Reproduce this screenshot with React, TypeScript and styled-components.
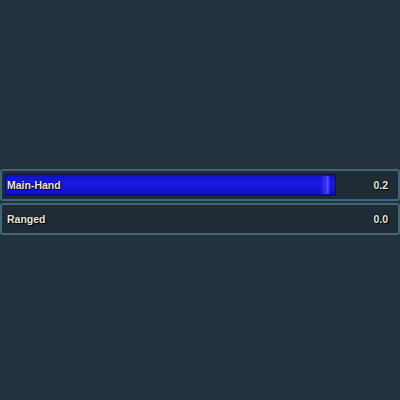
import React from 'react';
import styled, { createGlobalStyle } from 'styled-components';

const GlobalStyle = createGlobalStyle`
  html, body {
    margin: 0;
    padding: 0;
    background: #23323c;
    width: 400px;
    height: 400px;
    overflow: hidden;
  }
`;

const Page = styled.div`
  width: 400px;
  height: 400px;
  display: flex;
  flex-direction: column;
  justify-content: center;
  gap: 2px;
  padding-top: 4px;
  box-sizing: border-box;
`;

const SwingRow = styled.div`
  height: 32px;
  box-sizing: border-box;
  border: 2px solid #3d6679;
  border-radius: 3px;
  background: #1f2c35;
  display: flex;
  align-items: center;
  padding: 0 10px 0 3px;
`;

const Track = styled.div`
  width: 356px;
  height: 22px;
  position: relative;
  display: flex;
  align-items: center;
`;

const Fill = styled.div`
  position: absolute;
  left: 0;
  top: 0;
  bottom: 0;
  box-sizing: border-box;
  border: 1px solid #10104a;
  background: linear-gradient(#1010bc, #1818e0 30%, #1616da 70%, #0c0cae);
`;

// soft glow near the leading edge of the fill
const Spark = styled.div`
  position: absolute;
  top: 1px;
  bottom: 1px;
  right: 5px;
  width: 10px;
  background: linear-gradient(90deg, rgba(60, 60, 255, 0), rgba(70, 70, 255, 0.7) 65%, #5050ff 75%, rgba(40, 40, 240, 0.4));
`;

const Label = styled.span`
  position: relative;
  padding-left: 2px;
  font-family: 'Liberation Sans', Arial, sans-serif;
  font-weight: bold;
  font-size: 10.5px;
  color: #e8e6df;
  text-shadow: 1px 1px 0 #000, 0 0 2px #000;
`;

const Value = styled.span`
  margin-left: auto;
  font-family: 'Liberation Sans', Arial, sans-serif;
  font-weight: bold;
  font-size: 10.5px;
  color: #e8e6df;
  text-shadow: 1px 1px 0 #000, 0 0 2px #000;
`;

const swings = [
  { name: 'Main-Hand', value: 0.2, pct: 93 },
  { name: 'Ranged', value: 0.0, pct: 0 },
];

export default function App() {
  return (
    <>
      <GlobalStyle />
      <Page>
        {swings.map(s => (
          <SwingRow key={s.name}>
            <Track>
              {s.pct > 0 && (
                <Fill style={{ width: `${s.pct}%` }}>
                  <Spark />
                </Fill>
              )}
              <Label>{s.name}</Label>
            </Track>
            <Value>{s.value.toFixed(1)}</Value>
          </SwingRow>
        ))}
      </Page>
    </>
  );
}
